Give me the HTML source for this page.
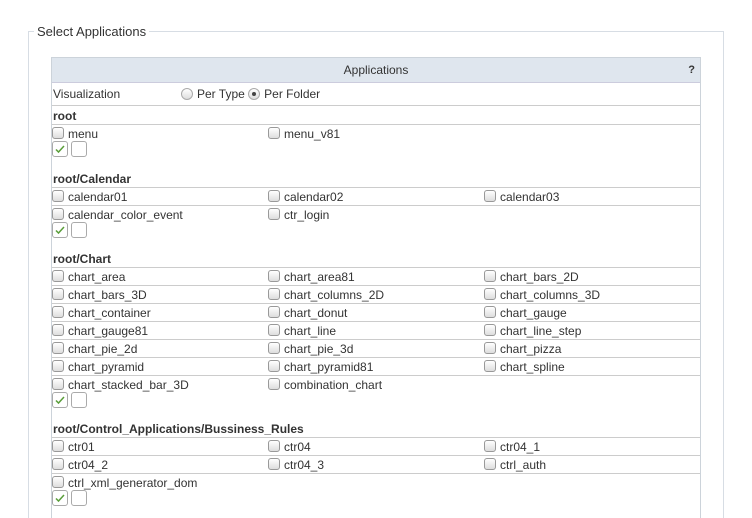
<!DOCTYPE html>
<html style="width:752px;height:518px;overflow:hidden"><head><style>
*{box-sizing:border-box;margin:0;padding:0}
body{width:752px;height:518px;overflow:hidden;background:#fff;font-family:"Liberation Sans",Arial,sans-serif;font-size:12px;color:#333;position:relative}
.fs{position:absolute;left:28px;top:31px;width:696px;height:487px;border:1px solid #d7dde4;border-bottom:none}
.lg{position:absolute;left:34px;top:24px;background:#fff;padding:0 3px;font-size:13px;color:#333}
.tb{position:absolute;left:51px;top:57px;width:650px;height:461px;border:1px solid #ccd3da;border-bottom:none;overflow:hidden}
.hd{height:25px;background:#dfe6ee;text-align:center;line-height:25px;color:#333;position:relative;border-bottom:1px solid #ccd;}
.hd b{position:absolute;right:5px;top:0;font-size:11px}
.vz{height:23px;line-height:23px;border-bottom:1px solid #ccc;position:relative;padding-left:1px}
.rad{display:inline-block;width:12px;height:12px;border:1px solid #aaa;border-radius:50%;background:linear-gradient(#fff,#ddd);vertical-align:-2px;margin-right:4px;position:relative}
.rad.on::after{content:"";position:absolute;left:3px;top:3px;width:4px;height:4px;border-radius:50%;background:#444}
.h{height:19px;line-height:21px;font-weight:bold;border-bottom:1px solid #ccc;padding-left:1px}
.r{height:18px;line-height:18px;position:relative}
.r.l{border-bottom:1px solid #ccc}
.c{position:absolute;top:0}
.cb{display:inline-block;width:12px;height:12px;border:1px solid #999;border-radius:3px;background:linear-gradient(#fff,#ddd);vertical-align:-1px;margin-right:4px}
.bt{height:16px;position:relative;margin-bottom:11px;margin-top:-2px}
.b{position:absolute;top:0;width:16px;height:16px;border:1px solid #aaa;border-radius:3px;background:#fff}
</style></head><body>
<div class="fs"></div><div class="lg">Select Applications</div>
<div class="tb">
<div class="hd">Applications<b>?</b></div>
<div class="vz">Visualization<span style="position:absolute;left:129px"><span class="rad"></span>Per Type <span class="rad on"></span>Per Folder</span></div>
<div class="h">root</div>
<div class="r"><span class="c" style="left:0"><span class="cb"></span>menu</span><span class="c" style="left:216px"><span class="cb"></span>menu_v81</span></div>
<div class="bt" style="margin-bottom:12px"><span class="b" style="left:0"><svg width="14" height="14" viewBox="0 0 14 14"><path d="M3 7.5l2.5 2.5 5.5-6" stroke="#5a9e3a" stroke-width="1.5" fill="none"/></svg></span><span class="b" style="left:19px"></span></div>
<div class="h">root/Calendar</div>
<div class="r l"><span class="c" style="left:0"><span class="cb"></span>calendar01</span><span class="c" style="left:216px"><span class="cb"></span>calendar02</span><span class="c" style="left:432px"><span class="cb"></span>calendar03</span></div>
<div class="r"><span class="c" style="left:0"><span class="cb"></span>calendar_color_event</span><span class="c" style="left:216px"><span class="cb"></span>ctr_login</span></div>
<div class="bt"><span class="b" style="left:0"><svg width="14" height="14" viewBox="0 0 14 14"><path d="M3 7.5l2.5 2.5 5.5-6" stroke="#5a9e3a" stroke-width="1.5" fill="none"/></svg></span><span class="b" style="left:19px"></span></div>
<div class="h">root/Chart</div>
<div class="r l"><span class="c" style="left:0"><span class="cb"></span>chart_area</span><span class="c" style="left:216px"><span class="cb"></span>chart_area81</span><span class="c" style="left:432px"><span class="cb"></span>chart_bars_2D</span></div>
<div class="r l"><span class="c" style="left:0"><span class="cb"></span>chart_bars_3D</span><span class="c" style="left:216px"><span class="cb"></span>chart_columns_2D</span><span class="c" style="left:432px"><span class="cb"></span>chart_columns_3D</span></div>
<div class="r l"><span class="c" style="left:0"><span class="cb"></span>chart_container</span><span class="c" style="left:216px"><span class="cb"></span>chart_donut</span><span class="c" style="left:432px"><span class="cb"></span>chart_gauge</span></div>
<div class="r l"><span class="c" style="left:0"><span class="cb"></span>chart_gauge81</span><span class="c" style="left:216px"><span class="cb"></span>chart_line</span><span class="c" style="left:432px"><span class="cb"></span>chart_line_step</span></div>
<div class="r l"><span class="c" style="left:0"><span class="cb"></span>chart_pie_2d</span><span class="c" style="left:216px"><span class="cb"></span>chart_pie_3d</span><span class="c" style="left:432px"><span class="cb"></span>chart_pizza</span></div>
<div class="r l"><span class="c" style="left:0"><span class="cb"></span>chart_pyramid</span><span class="c" style="left:216px"><span class="cb"></span>chart_pyramid81</span><span class="c" style="left:432px"><span class="cb"></span>chart_spline</span></div>
<div class="r"><span class="c" style="left:0"><span class="cb"></span>chart_stacked_bar_3D</span><span class="c" style="left:216px"><span class="cb"></span>combination_chart</span></div>
<div class="bt"><span class="b" style="left:0"><svg width="14" height="14" viewBox="0 0 14 14"><path d="M3 7.5l2.5 2.5 5.5-6" stroke="#5a9e3a" stroke-width="1.5" fill="none"/></svg></span><span class="b" style="left:19px"></span></div>
<div class="h">root/Control_Applications/Bussiness_Rules</div>
<div class="r l"><span class="c" style="left:0"><span class="cb"></span>ctr01</span><span class="c" style="left:216px"><span class="cb"></span>ctr04</span><span class="c" style="left:432px"><span class="cb"></span>ctr04_1</span></div>
<div class="r l"><span class="c" style="left:0"><span class="cb"></span>ctr04_2</span><span class="c" style="left:216px"><span class="cb"></span>ctr04_3</span><span class="c" style="left:432px"><span class="cb"></span>ctrl_auth</span></div>
<div class="r"><span class="c" style="left:0"><span class="cb"></span>ctrl_xml_generator_dom</span></div>
<div class="bt"><span class="b" style="left:0"><svg width="14" height="14" viewBox="0 0 14 14"><path d="M3 7.5l2.5 2.5 5.5-6" stroke="#5a9e3a" stroke-width="1.5" fill="none"/></svg></span><span class="b" style="left:19px"></span></div>
</div>
</body></html>
